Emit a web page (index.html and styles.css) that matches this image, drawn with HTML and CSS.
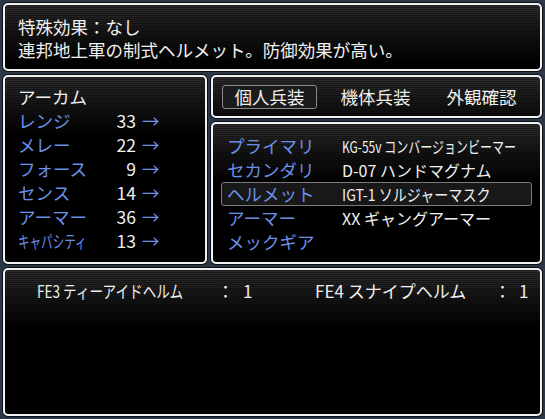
FILE: index.html
```html
<!DOCTYPE html>
<html lang="ja">
  <head>
    <meta charset="UTF-8" />
    <meta name="viewport" content="width=device-width, initial-scale=1.0" />
    <title>装備画面</title>
    <link rel="stylesheet" href="styles.css">
  </head>
  <body>
    <div class="screen">
      <!-- Description of the selected item -->
      <div class="panel desc">
        <p>特殊効果：なし</p>
        <p>連邦地上軍の制式ヘルメット。防御効果が高い。</p>
      </div>

      <div class="middle">
        <!-- Character stats -->
        <div class="panel stats">
          <div class="name">アーカム</div>
          <div class="stat"><span class="label">レンジ</span><span class="num">33</span><span class="arrow">→</span></div>
          <div class="stat"><span class="label">メレー</span><span class="num">22</span><span class="arrow">→</span></div>
          <div class="stat"><span class="label">フォース</span><span class="num">9</span><span class="arrow">→</span></div>
          <div class="stat"><span class="label">センス</span><span class="num">14</span><span class="arrow">→</span></div>
          <div class="stat"><span class="label">アーマー</span><span class="num">36</span><span class="arrow">→</span></div>
          <div class="stat"><span class="label"><span class="squeeze narrow">キャパシティ</span></span><span class="num">13</span><span class="arrow">→</span></div>
        </div>

        <div class="right">
          <div class="panel tabs">
            <span class="tab active">個人兵装</span>
            <span class="tab">機体兵装</span>
            <span class="tab">外観確認</span>
          </div>

          <div class="panel slots">
            <div class="slot"><span class="label">プライマリ</span><span class="value"><span class="squeeze tight">KG-55v コンバージョンビーマー</span></span></div>
            <div class="slot"><span class="label">セカンダリ</span><span class="value">D-07 ハンドマグナム</span></div>
            <div class="slot selected"><span class="label">ヘルメット</span><span class="value"><span class="squeeze">IGT-1 ソルジャーマスク</span></span></div>
            <div class="slot"><span class="label">アーマー</span><span class="value">XX ギャングアーマー</span></div>
            <div class="slot"><span class="label">メックギア</span><span class="value"></span></div>
          </div>
        </div>
      </div>

      <!-- Inventory for the selected slot -->
      <div class="panel items">
        <div class="item"><span class="item-name"><span class="squeeze fit">FE3 ティーアイドヘルム</span></span><span>：</span><span>1</span></div>
        <div class="item"><span class="item-name">FE4 スナイプヘルム</span><span>：</span><span>1</span></div>
      </div>
    </div>
  </body>
</html>
```

FILE: styles.css
```css
* {
  box-sizing: border-box;
}

body {
  margin: 0;
  background-color: #2b3746;
  font-family: "Noto Sans CJK JP", "Noto Sans", sans-serif;
  color: #f0f0f0;
}

p {
  margin: 0;
  white-space: nowrap;
}

.screen {
  width: 545px;
  height: 419px;
  padding: 3px;
  display: flex;
  flex-direction: column;
  gap: 4px;
  overflow: hidden;
}

.panel {
  border: 2px solid #f2f2f2;
  border-radius: 5px;
  box-shadow: 0 0 0 1px #0b0f14;
  overflow: hidden;
  background:
    repeating-linear-gradient(rgba(0, 0, 0, 0.35) 0 1px, transparent 1px 2px),
    linear-gradient(#2c2c2c 0, #141414 28px, #000 60px);
}

/* text that is squeezed sideways to fit its column, as the game does */
.squeeze {
  display: inline-block;
  white-space: nowrap;
  transform: scaleX(0.88);
  transform-origin: left;
}

.squeeze.narrow {
  font-size: 17px;
  transform: scaleX(0.68);
}

.squeeze.tight {
  transform: scaleX(0.75);
}

.squeeze.fit {
  transform: scaleX(0.8);
}

.desc {
  height: 68px;
  padding: 10px 13px;
  font-size: 17.5px;
  line-height: 23px;
}

.middle {
  height: 189px;
  display: flex;
  gap: 4px;
}

.stats {
  flex: 0 0 204px;
  padding: 8px 13px;
  font-size: 17.5px;
  line-height: 24px;
}

.stat {
  display: grid;
  grid-template-columns: 88px 30px 26px;
}

.label {
  color: #6b90e8;
  white-space: nowrap;
}

.num {
  text-align: right;
}

.arrow {
  color: #6b90e8;
  padding-left: 6px;
}

.right {
  flex: 1;
  min-width: 0;
  display: flex;
  flex-direction: column;
  gap: 4px;
}

.tabs {
  height: 43px;
  padding: 0 9px;
  display: flex;
  align-items: center;
  gap: 11px;
  font-size: 17.5px;
}

.tab {
  width: 95px;
  height: 24px;
  line-height: 22px;
  text-align: center;
  border: 1px solid transparent;
  border-radius: 3px;
}

.tab.active {
  border-color: #8a8a8a;
  background-color: #1b1b1b;
}

.slots {
  flex: 1;
  padding: 10px 8px;
  font-size: 17.5px;
}

.slot {
  display: grid;
  grid-template-columns: 115px 1fr;
  height: 24px;
  line-height: 22px;
  padding-left: 5px;
  border: 1px solid transparent;
  border-radius: 3px;
}

.slot.selected {
  border-color: #7a7a7a;
  background-color: #181818;
}

.value {
  font-size: 16px;
  white-space: nowrap;
  overflow-x: clip;
}

.items {
  flex: 1;
  padding: 9px 0 0 32px;
  display: flex;
  align-items: flex-start;
  font-size: 17px;
  line-height: 24px;
}

.item {
  flex: 0 0 278px;
  display: grid;
  grid-template-columns: 180px 26px 1fr;
  white-space: nowrap;
}

.item:last-child {
  flex: 1;
  grid-template-columns: 179px 25px 1fr;
}

.item-name {
  overflow-x: clip;
}
```
